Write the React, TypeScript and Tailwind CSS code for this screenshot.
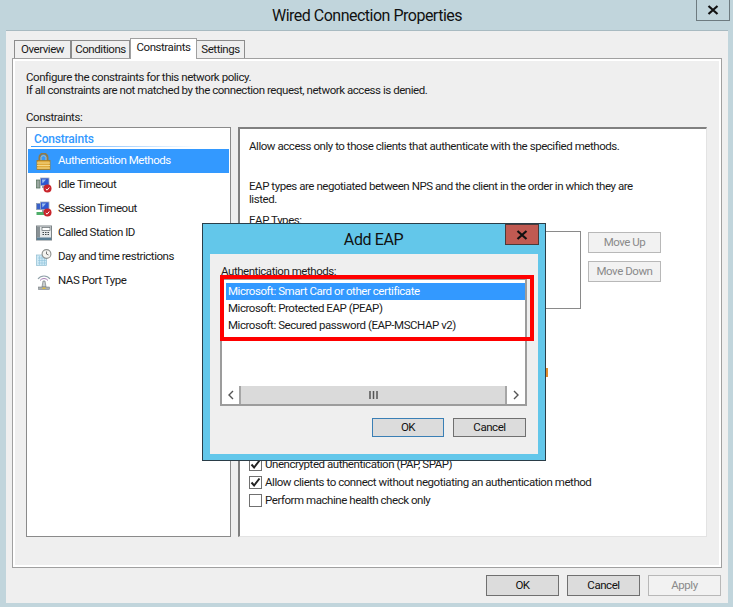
import React from "react";

const font = { fontFamily: 'Roboto, "Open Sans", sans-serif' };

function LockIcon() {
  return (
    <svg width="15" height="17" viewBox="0 0 15 17">
      <path d="M3.5 8V4.5a4 4 0 0 1 8 0V8" fill="none" stroke="#8f7a4a" strokeWidth="2" />
      <path d="M5 8V4.5a2.6 2.6 0 0 1 5 0V8" fill="none" stroke="#d8c79a" strokeWidth="0.8" />
      <rect x="1" y="7.5" width="13" height="9" fill="#e0aa3c" stroke="#a97a1e" strokeWidth="0.8" />
      <path d="M1 10h13M1 12.5h13M1 15h13" stroke="#f5d98a" strokeWidth="1" />
    </svg>
  );
}
function MonitorBadge({ variant }: { variant: "idle" | "session" }) {
  return (
    <svg width="16" height="16" viewBox="0 0 16 16">
      {variant === "idle" ? (
        <rect x="0.5" y="3" width="3.5" height="8" fill="#9aa7a0" stroke="#4d6b55" strokeWidth="0.7" />
      ) : (
        <>
          <rect x="0.5" y="2.5" width="7" height="6" fill="#3a62c8" stroke="#8a9ab0" strokeWidth="0.8" />
          <rect x="0.5" y="11" width="8" height="3" fill="#4fae6a" />
        </>
      )}
      <rect x="4.5" y="1" width="8.5" height="7.5" fill="#2f58d0" stroke="#a3aebd" strokeWidth="0.8" />
      <path d="M6 2.5l4 0-3.5 4z" fill="#9cc0f2" />
      <rect x="6" y="9" width="6" height="2" fill="#9aa3ad" />
      <circle cx="11.5" cy="11.5" r="4" fill="#c9252c" />
      <path d="M9.8 12l1.3 1.2 2.2-2.7" fill="none" stroke="#fff" strokeWidth="1" />
    </svg>
  );
}
function PhoneIcon() {
  return (
    <svg width="16" height="16" viewBox="0 0 16 16">
      <rect x="0.5" y="1" width="15" height="14" fill="#e6e9ea" stroke="#7c8488" />
      <rect x="1" y="1.5" width="3" height="11" fill="#8a9296" />
      <rect x="6" y="2.5" width="8" height="3" fill="#fff" stroke="#5c6468" strokeWidth="0.7" />
      <path d="M6.5 7.5h1.5m1 0h1.5m1 0h1.5M6.5 9.5h1.5m1 0h1.5m1 0h1.5" stroke="#3f474b" />
      <rect x="1" y="12.5" width="14" height="2.5" fill="#5a7f96" />
    </svg>
  );
}
function ClockIcon() {
  return (
    <svg width="16" height="17" viewBox="0 0 16 17">
      <rect x="0.5" y="6" width="10" height="10.5" fill="#cfe9f5" stroke="#8fbcd0" strokeWidth="0.7" />
      <path d="M2 9h8M2 11.5h8M2 14h8M3.5 7v9M6 7v9M8.5 7v9" stroke="#8fc3da" strokeWidth="0.6" />
      <circle cx="10.5" cy="5" r="4.4" fill="#f4f4f0" stroke="#8d918f" strokeWidth="1.1" />
      <path d="M10.5 2.5V5l2 1" fill="none" stroke="#555" strokeWidth="0.8" />
    </svg>
  );
}
function PortIcon() {
  return (
    <svg width="16" height="17" viewBox="0 0 16 17">
      <path d="M2 6a7.5 7.5 0 0 1 12 0" fill="none" stroke="#8fa0a8" strokeWidth="1.1" />
      <path d="M4 7.5a5 5 0 0 1 8 0" fill="none" stroke="#a57fb5" strokeWidth="1" />
      <path d="M7 8h2l1 6H6z" fill="#c9ced0" stroke="#6b7276" strokeWidth="0.6" />
      <rect x="2.5" y="14" width="11" height="2.5" fill="#a9b0b3" stroke="#6b7276" strokeWidth="0.5" />
      <rect x="6.5" y="14.5" width="3" height="1.5" fill="#e0b93c" />
    </svg>
  );
}

function Tab({ label, w, active }: { label: string; w: string; active?: boolean }) {
  return active ? (
    <div className={`${w} h-[21px] -mb-px z-10 bg-white border border-b-0 border-[#a0a0a0] flex justify-center leading-[16px]`}>
      {label}
    </div>
  ) : (
    <div className={`${w} h-[18px] bg-[#efefef] border border-b-0 border-[#8c8c8c] flex justify-center items-center mt-[2px] pt-[1px]`}>
      {label}
    </div>
  );
}

const rows: [React.ReactNode, string, boolean][] = [
  [<LockIcon />, "Authentication Methods", true],
  [<MonitorBadge variant="idle" />, "Idle Timeout", false],
  [<MonitorBadge variant="session" />, "Session Timeout", false],
  [<PhoneIcon />, "Called Station ID", false],
  [<ClockIcon />, "Day and time restrictions", false],
  [<PortIcon />, "NAS Port Type", false],
];

function Check({ label, checked, className }: { label: string; checked?: boolean; className?: string }) {
  return (
    <div className={`flex items-center h-[18px] ${className ?? ""}`}>
      <span className="w-[13px] h-[13px] bg-white border border-[#707070] flex items-center justify-center mr-[3px] shrink-0">
        {checked && (
          <svg width="11" height="11" viewBox="0 0 11 11">
            <path d="M1.5 5.5l2.6 3L9.5 1.5" fill="none" stroke="#222" strokeWidth="2" />
          </svg>
        )}
      </span>
      <span className="pt-[1px]">{label}</span>
    </div>
  );
}

function Btn({ label, disabled, primary, w = "w-[73px]", h = "h-[21px]" }: { label: string; disabled?: boolean; primary?: boolean; w?: string; h?: string }) {
  return (
    <div
      className={`${w} ${h} border flex items-center justify-center ${
        disabled
          ? "bg-[#f2f2f2] border-[#b8b8b8] text-[#8a8a8a]"
          : primary
            ? "bg-[#dcdcdc] border-[#3a7fb5] text-[#111]"
            : "bg-[#dcdcdc] border-[#707070] text-[#111]"
      }`}
    >
      {label}
    </div>
  );
}

function X({ size = 12 }: { size?: number }) {
  return (
    <svg width={size} height={size - 2} viewBox="0 0 12 10">
      <path d="M1.5 1l9 8M10.5 1l-9 8" stroke="#111" strokeWidth="2.2" />
    </svg>
  );
}

export default function App() {
  return (
    <div className="relative w-[733px] h-[607px] overflow-hidden bg-[#c1d5dc] text-[11.5px] tracking-[-0.45px] text-[#1a1a1a]" style={font}>
      {/* title bar */}
      <div className="relative h-[30px] flex items-center justify-center text-[16px] tracking-[-0.5px] text-[#111] pl-[1px] pt-[1px]">
        Wired Connection Properties
        <div className="absolute left-[696px] top-[-1px] w-[34px] h-[22px] border border-[#6e7b80] flex items-center justify-center">
          <X />
        </div>
      </div>

      {/* window body */}
      <div className="ml-[6px] w-[722px] h-[573px] bg-[#efefef] border-t border-[#a8bac1] pt-[7px] flex flex-col">
        <div className="flex items-end pl-[8px] h-[20px] relative">
          <Tab label="Overview" w="w-[57px]" />
          <Tab label="Conditions" w="w-[59px]" />
          <Tab label="Constraints" w="w-[67px]" active />
          <Tab label="Settings" w="w-[49px] -ml-px" />
        </div>
        <div className="ml-[6px] w-[710px] h-[510px] border border-[#a0a0a0] bg-[#efefef] shadow-[inset_0_0_0_2px_#fff] pl-[13px] pt-[12px] flex flex-col">
          <div className="leading-[13px]">Configure the constraints for this network policy.</div>
          <div className="leading-[13px]">If all constraints are not matched by the connection request, network access is denied.</div>
          <div className="leading-[13px] mt-[14px]">Constraints:</div>
          <div className="flex mt-[3px] h-[410px]">
            {/* left list */}
            <div className="w-[205px] h-full bg-white border border-[#8a8a8a] p-[1px] flex flex-col">
              <div className="h-[17px] pl-[6px] pt-[3px] text-[#3399ff] font-medium text-[12px] tracking-[-0.2px] leading-[15px]">Constraints</div>
              <div className="h-[1px] ml-[3px] mr-[30px] mb-[2px] bg-gradient-to-r from-[#3399ff] to-white" />
              {rows.map(([icon, label, selected]) => (
                <div key={label} className={`h-[24px] flex items-center pl-[8px] ${selected ? "bg-[#3399ff] text-white" : ""}`}>
                  <span className="w-[22px] flex items-center">{icon}</span>
                  <span>{label}</span>
                </div>
              ))}
            </div>
            {/* right pane */}
            <div className="ml-[7px] w-[469px] h-full bg-white border-t-2 border-l-2 border-r border-b border-t-[#808080] border-l-[#808080] border-r-[#e3e3e3] border-b-[#e3e3e3] pl-[9px] pt-[11px] flex flex-col">
              <div className="leading-[13px]">Allow access only to those clients that authenticate with the specified methods.</div>
              <div className="leading-[13px] mt-[27px]">EAP types are negotiated between NPS and the client in the order in which they are</div>
              <div className="leading-[13px]">listed.</div>
              <div className="leading-[13px] mt-[8px]">EAP Types:</div>
              <div className="flex mt-[4px] h-[78px]">
                <div className="w-[332px] h-full bg-white border border-[#8a8a8a]" />
                <div className="ml-[7px] flex flex-col gap-[8px] pt-[1px]">
                  <Btn label="Move Up" disabled />
                  <Btn label="Move Down" disabled />
                </div>
              </div>
              <div className="mt-[146px] flex flex-col">
                <Check label="Unencrypted authentication (PAP, SPAP)" checked />
                <Check label="Allow clients to connect without negotiating an authentication method" checked />
                <Check label="Perform machine health check only" />
              </div>
            </div>
          </div>
        </div>
        {/* footer */}
        <div className="flex justify-end gap-[8px] pr-[7px] pt-[7px]">
          <Btn label="OK" />
          <Btn label="Cancel" />
          <Btn label="Apply" disabled />
        </div>
      </div>

      {/* fragment peeking out from behind the dialog */}
      <div className="absolute left-[544px] top-[368px] w-[4px] h-[9px] bg-[#e08a2c]" />

      {/* modal dialog */}
      <div className="absolute left-[202px] top-[223px] w-[344px] h-[238px] bg-[#63c7ea] border border-[#2a3d48] px-[7px] pb-[6px] flex flex-col">
        <div className="relative h-[30px] flex items-center justify-center text-[16px] tracking-[-0.4px] text-[#111] shrink-0 pr-[1px] pt-[1px]">
          Add EAP
          <div className="absolute right-[-1px] top-[0px] w-[34px] h-[21px] bg-[#c05a52] border border-[#4a3a3a] flex items-center justify-center">
            <X />
          </div>
        </div>
        <div className="flex-1 bg-[#efefef] pl-[10px] pt-[10px] flex flex-col relative">
          <div className="leading-[13px] pl-[1px] pt-[1px] h-[13px]">Authentication methods:</div>
          <div className="w-[307px] h-[128px] mt-[1px] bg-white border-2 border-[#9c9c9c] p-[1px] pl-[4px] flex flex-col relative">
            <div className="h-[17px] mt-[2px] bg-[#3399ff] text-white flex items-center pl-[2px] pt-[1px] mr-[-1px]">Microsoft: Smart Card or other certificate</div>
            <div className="h-[17px] flex items-center pl-[2px] pt-[1px]">Microsoft: Protected EAP (PEAP)</div>
            <div className="h-[17px] flex items-center pl-[2px] pt-[1px]">Microsoft: Secured password (EAP-MSCHAP v2)</div>
            <div className="flex-1" />
            <div className="h-[18px] ml-[-4px] mb-[-1px] flex items-stretch">
              <div className="w-[17px] flex items-center justify-center">
                <svg width="8" height="10" viewBox="0 0 8 10"><path d="M6 1L2 5l4 4" fill="none" stroke="#555" strokeWidth="1.4" /></svg>
              </div>
              <div className="flex-1 bg-[#dadada] border-2 border-[#a6a6a6] border-y-0 flex items-center justify-center">
                <svg width="9" height="8" viewBox="0 0 9 8"><path d="M1 0v8M4.5 0v8M8 0v8" stroke="#555" strokeWidth="1.5" /></svg>
              </div>
              <div className="w-[17px] flex items-center justify-center">
                <svg width="8" height="10" viewBox="0 0 8 10"><path d="M2 1l4 4-4 4" fill="none" stroke="#555" strokeWidth="1.4" /></svg>
              </div>
            </div>
          </div>
          {/* red annotation */}
          <div className="absolute left-[10px] top-[21px] w-[314px] h-[66px] border-[4px] border-[#ff0000]" />
          <div className="flex justify-end gap-[9px] pr-[12px] mt-[12px]">
            <Btn label="OK" primary w="w-[72px]" h="h-[19px]" />
            <Btn label="Cancel" h="h-[19px]" />
          </div>
        </div>
      </div>
    </div>
  );
}
